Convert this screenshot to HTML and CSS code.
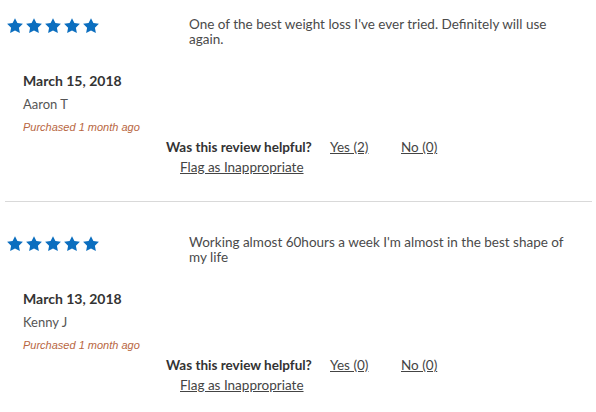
FILE: index.html
```html
<!DOCTYPE html>
<html lang="en">
<head>
  <meta charset="UTF-8" />
  <title>Reviews</title>
  <link rel="stylesheet" href="styles.css">
</head>
<body>
  <div class="review">
    <div class="review-top">
      <div class="stars">
        <svg viewBox="0 0 24 24"><path d="M12 1.5l3.2 6.6 7.3 1-5.3 5.1 1.3 7.2L12 18l-6.5 3.4 1.3-7.2L1.5 9.1l7.3-1z"/></svg>
        <svg viewBox="0 0 24 24"><path d="M12 1.5l3.2 6.6 7.3 1-5.3 5.1 1.3 7.2L12 18l-6.5 3.4 1.3-7.2L1.5 9.1l7.3-1z"/></svg>
        <svg viewBox="0 0 24 24"><path d="M12 1.5l3.2 6.6 7.3 1-5.3 5.1 1.3 7.2L12 18l-6.5 3.4 1.3-7.2L1.5 9.1l7.3-1z"/></svg>
        <svg viewBox="0 0 24 24"><path d="M12 1.5l3.2 6.6 7.3 1-5.3 5.1 1.3 7.2L12 18l-6.5 3.4 1.3-7.2L1.5 9.1l7.3-1z"/></svg>
        <svg viewBox="0 0 24 24"><path d="M12 1.5l3.2 6.6 7.3 1-5.3 5.1 1.3 7.2L12 18l-6.5 3.4 1.3-7.2L1.5 9.1l7.3-1z"/></svg>
      </div>
      <p class="review-text">One of the best weight loss I've ever tried. Definitely will use again.</p>
    </div>
    <div class="meta">
      <div class="date">March 15, 2018</div>
      <div class="author">Aaron T</div>
      <div class="purchased">Purchased 1 month ago</div>
    </div>
    <div class="helpful">
      <span class="question">Was this review helpful?</span>
      <a href="#" class="vote">Yes (2)</a>
      <a href="#" class="vote">No (0)</a>
    </div>
    <a href="#" class="flag">Flag as Inappropriate</a>
  </div>

  <div class="review">
    <div class="review-top">
      <div class="stars">
        <svg viewBox="0 0 24 24"><path d="M12 1.5l3.2 6.6 7.3 1-5.3 5.1 1.3 7.2L12 18l-6.5 3.4 1.3-7.2L1.5 9.1l7.3-1z"/></svg>
        <svg viewBox="0 0 24 24"><path d="M12 1.5l3.2 6.6 7.3 1-5.3 5.1 1.3 7.2L12 18l-6.5 3.4 1.3-7.2L1.5 9.1l7.3-1z"/></svg>
        <svg viewBox="0 0 24 24"><path d="M12 1.5l3.2 6.6 7.3 1-5.3 5.1 1.3 7.2L12 18l-6.5 3.4 1.3-7.2L1.5 9.1l7.3-1z"/></svg>
        <svg viewBox="0 0 24 24"><path d="M12 1.5l3.2 6.6 7.3 1-5.3 5.1 1.3 7.2L12 18l-6.5 3.4 1.3-7.2L1.5 9.1l7.3-1z"/></svg>
        <svg viewBox="0 0 24 24"><path d="M12 1.5l3.2 6.6 7.3 1-5.3 5.1 1.3 7.2L12 18l-6.5 3.4 1.3-7.2L1.5 9.1l7.3-1z"/></svg>
      </div>
      <p class="review-text">Working almost 60hours a week I'm almost in the best shape of my life</p>
    </div>
    <div class="meta">
      <div class="date">March 13, 2018</div>
      <div class="author">Kenny J</div>
      <div class="purchased">Purchased 1 month ago</div>
    </div>
    <div class="helpful">
      <span class="question">Was this review helpful?</span>
      <a href="#" class="vote">Yes (0)</a>
      <a href="#" class="vote">No (0)</a>
    </div>
    <a href="#" class="flag">Flag as Inappropriate</a>
  </div>
</body>
</html>
```

FILE: styles.css
```css
body {
  margin: 0;
  background: #fff;
  color: #444;
  font-family: Lato, "Open Sans", sans-serif;
  width: 592px;
}
.review {
  padding-top: 17px;
  height: 184px;
  border-bottom: 1px solid #d9d9d9;
  margin-left: 5px;
}
.review + .review {
  margin-top: 16px;
  border-bottom: none;
}
.review-top {
  display: flex;
  align-items: flex-start;
}
.stars {
  display: flex;
  gap: 1px;
  width: 183px;
  margin-left: 1px;
}
.stars svg {
  width: 18px;
  height: 18px;
  fill: #0b6ebf;
}
.review-text {
  margin: 0;
  width: 384px;
  font-size: 13.5px;
  line-height: 15px;
  color: #4a4a4a;
}
.meta {
  margin: 25px 0 0 18px;
}
.date {
  font-size: 14px;
  font-weight: bold;
  line-height: 18px;
  color: #333;
}
.author {
  margin-top: 6px;
  font-size: 13px;
  line-height: 16px;
  color: #555;
}
.purchased {
  margin-top: 8px;
  font-family: "Liberation Sans", Arial, sans-serif;
  font-style: italic;
  font-size: 11px;
  line-height: 14px;
  color: #b8663f;
}
.helpful {
  margin: 5px 0 0 161px;
  display: flex;
  font-size: 13.5px;
  line-height: 16px;
}
.question {
  font-weight: bold;
  color: #333;
  width: 164px;
}
.vote {
  color: #444;
  width: 71px;
}
.flag {
  display: inline-block;
  margin: 4px 0 0 175px;
  font-size: 13.5px;
  line-height: 16px;
  color: #444;
}
```
